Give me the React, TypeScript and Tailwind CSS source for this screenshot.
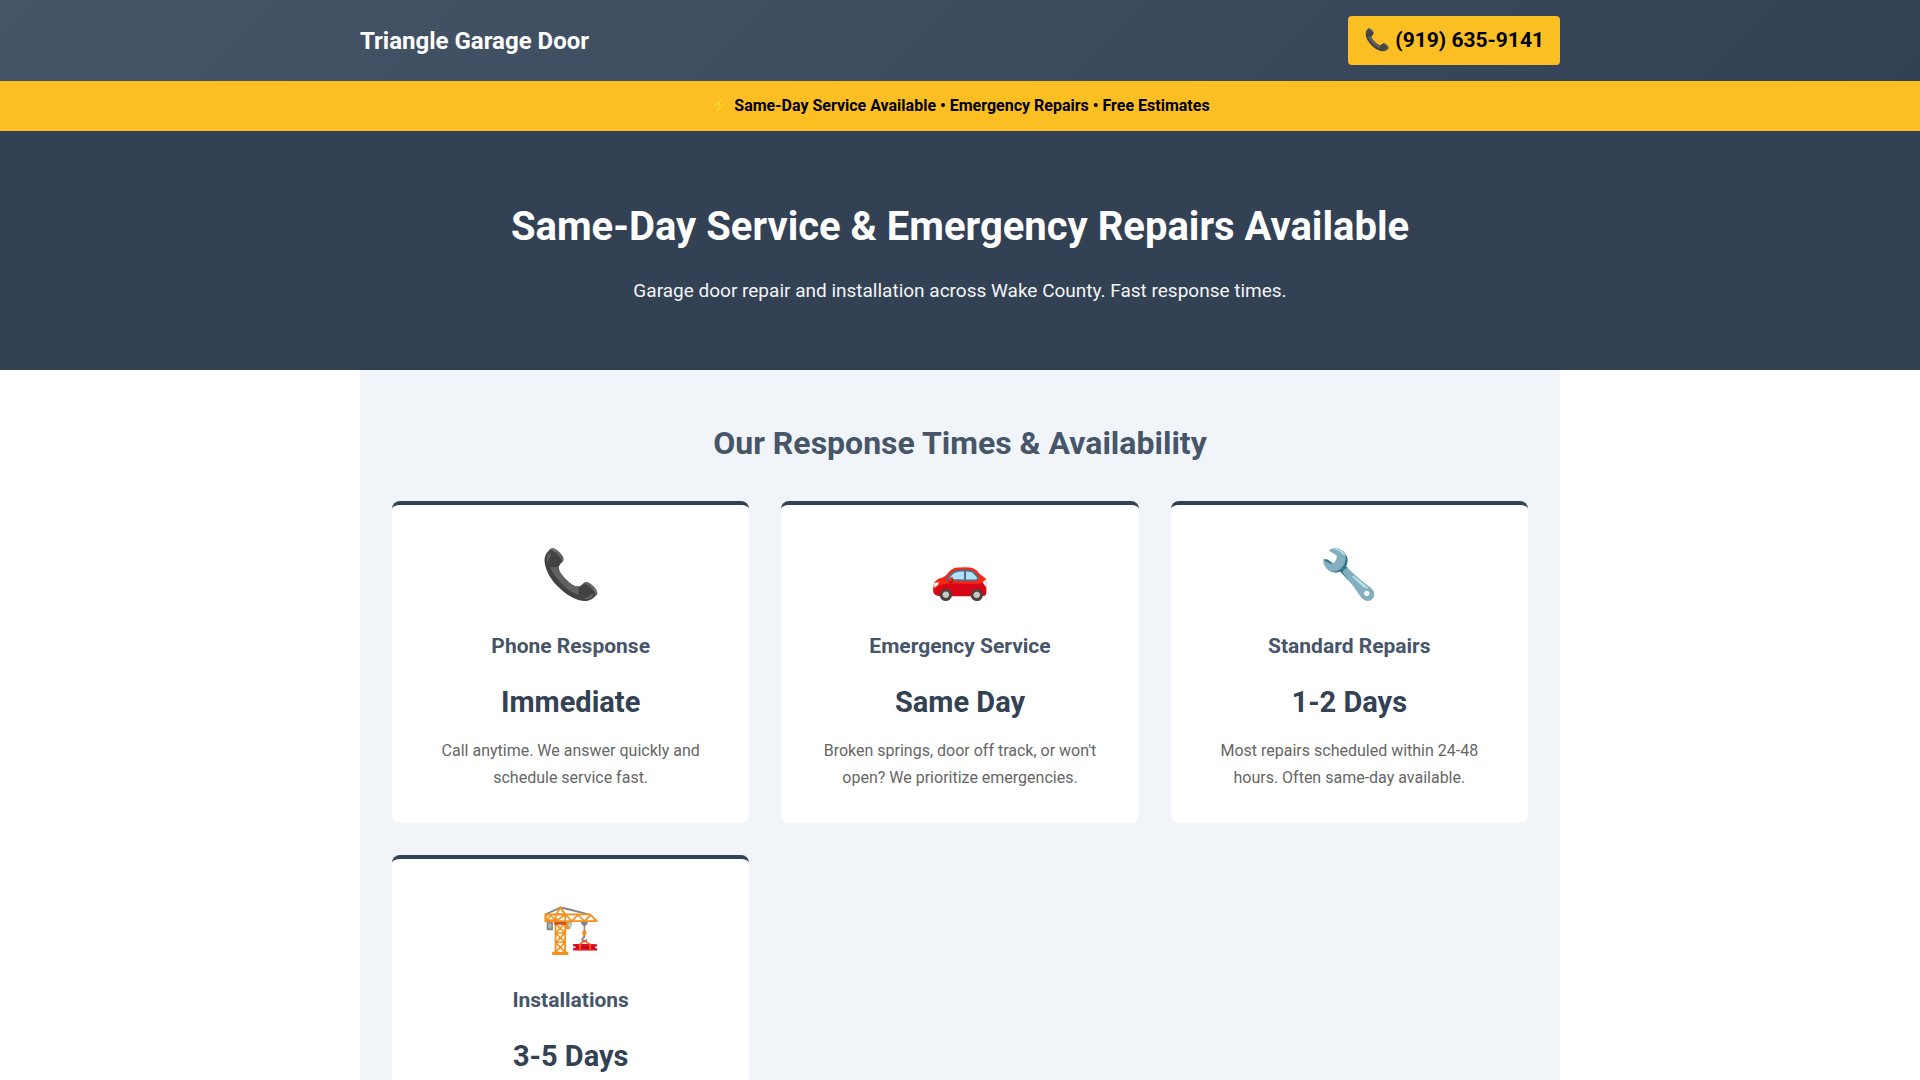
const responseTimes = [
  {
    icon: "📞",
    title: "Phone Response",
    time: "Immediate",
    description: "Call anytime. We answer quickly and schedule service fast.",
  },
  {
    icon: "🚗",
    title: "Emergency Service",
    time: "Same Day",
    description:
      "Broken springs, door off track, or won't open? We prioritize emergencies.",
  },
  {
    icon: "🔧",
    title: "Standard Repairs",
    time: "1-2 Days",
    description:
      "Most repairs scheduled within 24-48 hours. Often same-day available.",
  },
  {
    icon: "🏗️",
    title: "Installations",
    time: "3-5 Days",
    description: "New doors measured, ordered and installed on your schedule.",
  },
];

const Header = () => {
  return (
    <header className="bg-linear-135 from-[#475569] to-[#334155] px-4 py-4 text-white">
      <div className="mx-auto flex max-w-[1200px] items-center justify-between">
        <div className="text-2xl font-bold">Triangle Garage Door</div>
        <a
          href="tel:+19196359141"
          className="rounded bg-[#fbbf24] px-4 py-2 text-[21px] leading-[33px] font-bold text-black"
        >
          📞 (919) 635-9141
        </a>
      </div>
    </header>
  );
};

const Hero = () => {
  return (
    <section className="bg-[#334155] px-4 py-16 text-center text-white">
      <h1 className="mb-4 text-[40px] leading-[64px] font-bold">
        Same-Day Service & Emergency Repairs Available
      </h1>
      <p className="text-[19px] leading-[31px] opacity-95">
        Garage door repair and installation across Wake County. Fast response
        times.
      </p>
    </section>
  );
};

const ResponseTimes = () => {
  return (
    <section className="mx-auto max-w-[1200px] bg-[#f1f5f9] px-8 py-12">
      <h2 className="mb-8 text-center text-[32px] leading-[51px] font-bold text-[#475569]">
        Our Response Times & Availability
      </h2>
      <div className="grid grid-cols-1 gap-8 md:grid-cols-2 lg:grid-cols-3">
        {responseTimes.map((item) => (
          <div
            key={item.title}
            className="rounded-lg border-t-4 border-[#334155] bg-white p-8 text-center"
          >
            <div className="mb-4 text-5xl leading-[76px]">{item.icon}</div>
            <h3 className="mb-4 text-[21px] leading-[34px] font-bold text-[#475569]">
              {item.title}
            </h3>
            <div className="mb-3 text-[29px] leading-[46px] font-bold text-[#334155]">
              {item.time}
            </div>
            <p className="text-base leading-[27px] text-[#666666]">
              {item.description}
            </p>
          </div>
        ))}
      </div>
    </section>
  );
};

const App = () => {
  return (
    <div className="min-h-screen bg-white font-['Roboto',sans-serif] text-base">
      <Header />
      <div className="bg-[#fbbf24] px-4 py-3 text-center leading-[26px] font-bold text-black">
        ⚡ Same-Day Service Available • Emergency Repairs • Free Estimates
      </div>
      <Hero />
      <ResponseTimes />
    </div>
  );
};

export default App;
